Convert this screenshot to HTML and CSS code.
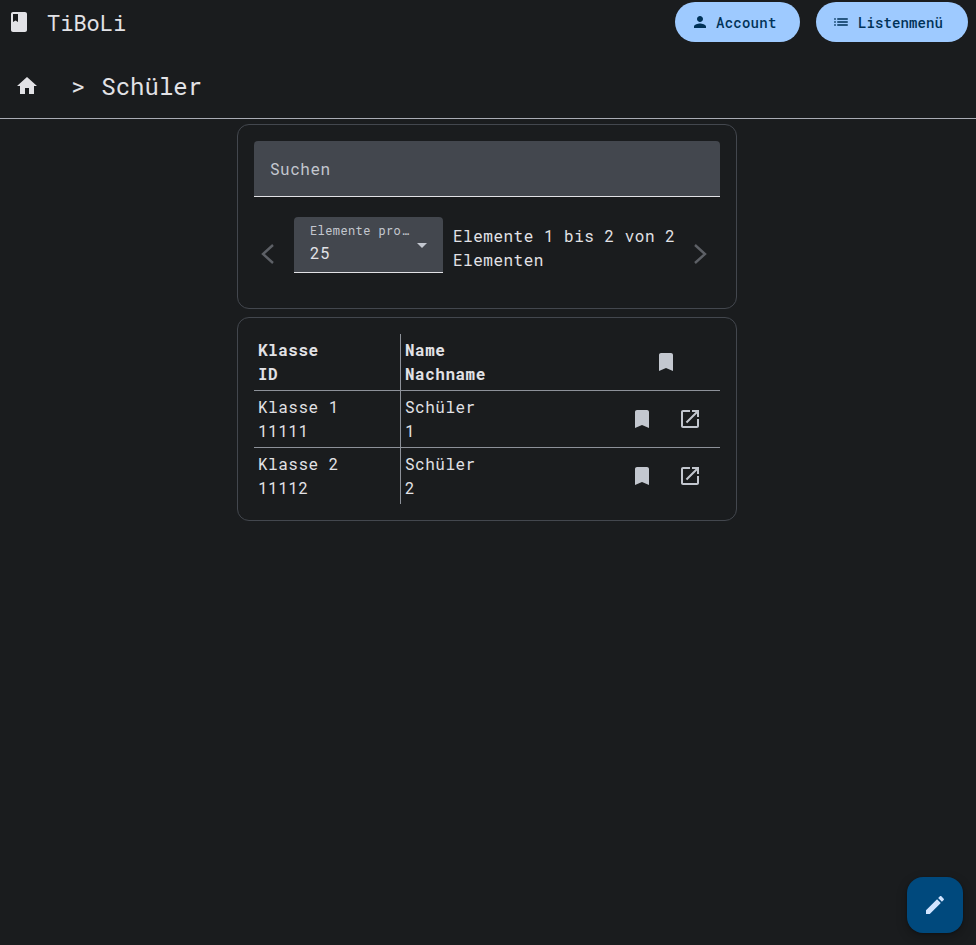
FILE: index.html
```html
<!DOCTYPE html>
<html lang="de">
<head>
<meta charset="utf-8">
<title>TiBoLi</title>
<link rel="stylesheet" href="styles.css">
</head>
<body>
<header class="topbar">
  <div class="brand">
    <svg class="icon icon-book" viewBox="0 0 24 24"><path d="M18 2H6c-1.1 0-2 .9-2 2v16c0 1.1.9 2 2 2h12c1.1 0 2-.9 2-2V4c0-1.1-.9-2-2-2zM6 4h5v8l-2.5-1.5L6 12V4z"/></svg>
    <span class="brand-name">TiBoLi</span>
  </div>
  <nav class="actions">
    <button class="pill pill-account"><svg class="pill-icon" viewBox="0 0 24 24"><path d="M12 12c2.21 0 4-1.79 4-4s-1.79-4-4-4-4 1.79-4 4 1.79 4 4 4zm0 2c-2.67 0-8 1.34-8 4v2h16v-2c0-2.66-5.33-4-8-4z"/></svg><span class="pill-text">Account</span></button>
    <button class="pill pill-list"><svg class="pill-icon" viewBox="0 0 24 24"><path d="M3 13h2v-2H3v2zm0 4h2v-2H3v2zm0-8h2V7H3v2zm4 4h14v-2H7v2zm0 4h14v-2H7v2zM7 7v2h14V7H7z"/></svg><span class="pill-text">Listenmenü</span></button>
  </nav>
</header>
<div class="crumbs">
  <svg class="icon icon-home" viewBox="0 0 24 24"><path d="M10 20v-6h4v6h5v-8h3L12 3 2 12h3v8z"/></svg>
  <span class="crumb-text">&gt; Schüler</span>
</div>
<main class="content">
  <section class="card card-search">
    <div class="search">Suchen</div>
    <div class="pager">
      <button class="chev"><svg viewBox="0 0 14 22"><polyline points="12,2 2,11 12,20"/></svg></button>
      <div class="select">
        <div class="select-label">Elemente pro…</div>
        <div class="select-value">25</div>
        <span class="select-arrow"></span>
      </div>
      <div class="range">Elemente 1 bis 2 von 2 Elementen</div>
      <button class="chev"><svg viewBox="0 0 14 22"><polyline points="2,2 12,11 2,20"/></svg></button>
    </div>
  </section>
  <section class="card card-table">
    <table class="table">
      <thead>
        <tr>
          <th class="col-a">Klasse<br>ID</th>
          <th class="col-b">Name<br>Nachname</th>
          <th class="col-c"><div class="head-icon"><svg class="icon icon-mark" viewBox="0 0 24 24"><path d="M17 3H7c-1.1 0-1.99.9-1.99 2L5 21l7-3 7 3V5c0-1.1-.9-2-2-2z"/></svg></div></th>
        </tr>
      </thead>
      <tbody>
        <tr>
          <td class="col-a">Klasse 1<br>11111</td>
          <td class="col-b">Schüler<br>1</td>
          <td class="col-c"><div class="row-icons">
            <svg class="icon icon-mark" viewBox="0 0 24 24"><path d="M17 3H7c-1.1 0-1.99.9-1.99 2L5 21l7-3 7 3V5c0-1.1-.9-2-2-2z"/></svg>
            <svg class="icon icon-open" viewBox="0 0 24 24"><path d="M19 19H5V5h7V3H5c-1.11 0-2 .9-2 2v14c0 1.1.89 2 2 2h14c1.1 0 2-.9 2-2v-7h-2v7zM14 3v2h3.59l-9.83 9.83 1.41 1.41L19 6.41V10h2V3h-7z"/></svg>
          </div></td>
        </tr>
        <tr>
          <td class="col-a">Klasse 2<br>11112</td>
          <td class="col-b">Schüler<br>2</td>
          <td class="col-c"><div class="row-icons">
            <svg class="icon icon-mark" viewBox="0 0 24 24"><path d="M17 3H7c-1.1 0-1.99.9-1.99 2L5 21l7-3 7 3V5c0-1.1-.9-2-2-2z"/></svg>
            <svg class="icon icon-open" viewBox="0 0 24 24"><path d="M19 19H5V5h7V3H5c-1.11 0-2 .9-2 2v14c0 1.1.89 2 2 2h14c1.1 0 2-.9 2-2v-7h-2v7zM14 3v2h3.59l-9.83 9.83 1.41 1.41L19 6.41V10h2V3h-7z"/></svg>
          </div></td>
        </tr>
      </tbody>
    </table>
  </section>
</main>
<button class="fab"><svg class="fab-icon" viewBox="0 0 24 24"><path d="M3 17.25V21h3.75L17.81 9.94l-3.75-3.75L3 17.25zM20.71 7.04c.39-.39.39-1.02 0-1.41l-2.34-2.34c-.39-.39-1.02-.39-1.41 0l-1.83 1.83 3.75 3.75 1.83-1.83z"/></svg></button>
</body>
</html>
```
FILE: styles.css
```css
* { box-sizing: border-box; }
html, body { height: 100%; }
body {
  margin: 0;
  background: #1a1c1e;
  color: #e2e2e6;
  font-family: "Roboto Mono", "Liberation Mono", "DejaVu Sans Mono", monospace;
  font-size: 16px;
  line-height: 24px;
  letter-spacing: 0.5px;
  overflow: hidden;
}
.icon { display: block; width: 24px; height: 24px; fill: #e2e2e6; flex: none; }
.topbar {
  display: flex;
  justify-content: space-between;
  align-items: flex-start;
  height: 46px;
  padding: 2px 8px 0 7px;
}
.brand { display: flex; align-items: center; height: 40px; }
.brand-name { margin-left: 16px; font-size: 22px; letter-spacing: 0; line-height: 28px; margin-top: 2px; }
.actions { display: flex; gap: 16px; }
.pill {
  display: flex;
  align-items: center;
  height: 40px;
  border: 0;
  border-radius: 20px;
  background: #9ecaff;
  color: #003258;
  font: inherit;
  font-size: 14px;
  font-weight: 500;
  letter-spacing: 0.1px;
  padding: 0 16px;
}
.pill-account { width: 125px; }
.pill-list { width: 152px; }
.pill-icon { width: 18px; height: 18px; fill: #003258; margin-right: 8px; flex: none; }
.pill-text { position: relative; top: 1px; }
.pill-account .pill-text { margin-left: -1px; letter-spacing: 0.25px; }
.crumbs {
  display: flex;
  align-items: center;
  height: 73px;
  padding: 8px 0 0 15px;
  border-bottom: 1px solid #a9acb4;
}
.crumb-text { margin-left: 32px; font-size: 24px; letter-spacing: 0; word-spacing: 1.5px; line-height: 32px; }
.content {
  display: flex;
  flex-direction: column;
  align-items: center;
  gap: 8px;
  padding: 5px 2px 0 0;
}
.card {
  width: 500px;
  border: 1px solid #43474e;
  border-radius: 12px;
  padding: 16px;
}
.card-search { height: 185px; }
.card-table { height: 204px; }
.search {
  height: 56px;
  padding: 16px;
  background: #43474e;
  border-bottom: 1px solid #e2e2e6;
  border-radius: 4px 4px 0 0;
  color: #c3c7cf;
}
.pager { display: flex; align-items: flex-start; margin-top: 20px; }
.chev {
  display: flex;
  justify-content: center;
  align-items: center;
  width: 28px;
  height: 56px;
  margin-top: 9px;
  padding: 0;
  background: none;
  border: 0;
  flex: none;
}
.chev svg { width: 14px; height: 22px; fill: none; stroke: #5d6066; stroke-width: 2.4; }
.select {
  position: relative;
  width: 149px;
  height: 56px;
  margin-left: 12px;
  padding: 5px 16px 0;
  background: #43474e;
  border-bottom: 1px solid #e2e2e6;
  border-radius: 4px 4px 0 0;
  flex: none;
}
.select-label { font-size: 12px; line-height: 16px; letter-spacing: 0.4px; color: #c3c7cf; white-space: nowrap; }
.select-value { margin-top: 3px; line-height: 24px; }
.select-arrow {
  position: absolute;
  right: 16px;
  top: 26px;
  border-left: 5px solid transparent;
  border-right: 5px solid transparent;
  border-top: 5px solid #c3c7cf;
}
.range { width: 232px; margin: 7px 0 0 10px; flex: none; }
.pager .chev:last-child { margin-left: 1px; }
.table { width: 466px; border-collapse: collapse; table-layout: fixed; }
th, td { padding: 4px; text-align: left; vertical-align: middle; height: 56px; }
th { font-weight: 700; }
tbody td { border-top: 1px solid #8d9199; }
.col-a { width: 146px; border-right: 1px solid #8d9199; }
.col-b { width: 216px; }
th.col-b, td.col-b { padding-left: 4.5px; }
th.col-c, td.col-c { padding: 0 4px 0 0; }
.head-icon { display: flex; justify-content: center; }
.row-icons { display: flex; padding-left: 2px; }
.row-icons .icon { margin: 0 12px; }
.icon-mark { fill: #c3c7cf; }
.icon-open { fill: #c3c7cf; }
.fab {
  position: fixed;
  right: 13px;
  bottom: 12px;
  display: flex;
  align-items: center;
  justify-content: center;
  width: 56px;
  height: 56px;
  padding: 0;
  border: 0;
  border-radius: 16px;
  background: #00497d;
  box-shadow: 0 1px 3px rgba(0,0,0,.3), 0 4px 8px 3px rgba(0,0,0,.15);
}
.fab-icon { width: 24px; height: 24px; fill: #d1e4ff; }
```
